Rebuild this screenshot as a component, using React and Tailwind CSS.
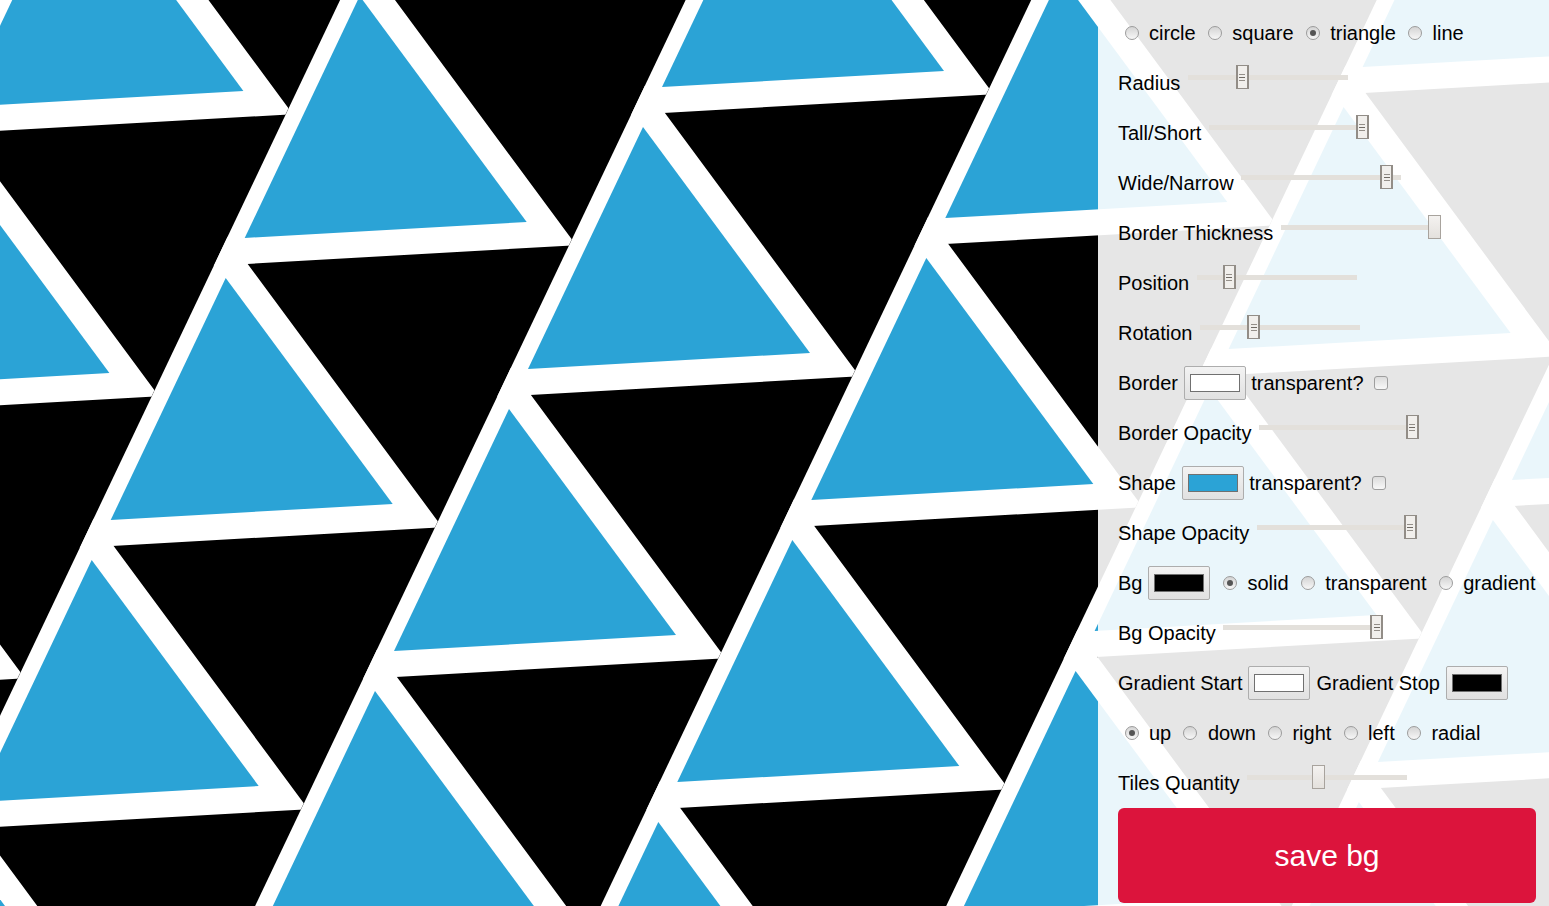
import React from "react";

const BLUE = "#2ba3d6";

function Pattern() {
  const O = [643, 127];
  const a = [283.3, 131];
  const b = [-134, 282];
  const la = Math.hypot(a[0], a[1]);
  const lb = Math.hypot(b[0], b[1]);
  const ah = [a[0] / la, a[1] / la];
  const bh = [b[0] / lb, b[1] / lb];
  const pt = (x, y, u, v) => `${(x + u * ah[0] + v * bh[0]).toFixed(1)},${(y + u * ah[1] + v * bh[1]).toFixed(1)}`;
  const tris = [];
  for (let i = -5; i <= 7; i++) {
    for (let j = -4; j <= 6; j++) {
      const x = O[0] + i * a[0] + j * b[0];
      const y = O[1] + i * a[1] + j * b[1];
      if (x < -400 || x > 1950 || y < -320 || y > 1200) continue;
      tris.push({
        tri: `${x},${y} ${x - 115},${y + 242} ${x + 167},${y + 226}`,
        clip: `${pt(x, y, -16, -400)} ${pt(x, y, 296, -400)} ${pt(x, y, 296, 700)} ${pt(x, y, -16, 700)}`,
      });
    }
  }
  return (
    <svg className="absolute inset-0" width="1549" height="906" viewBox="0 0 1549 906">
      <defs>
        {tris.map((t, k) => (
          <clipPath key={"c" + k} id={"tile" + k}>
            <polygon points={t.clip} />
          </clipPath>
        ))}
      </defs>
      <rect width="1549" height="906" fill="#000" />
      {tris.map((t, k) => (
        <polygon
          key={"w" + k}
          points={t.tri}
          clipPath={`url(#tile${k})`}
          fill="#fff"
          stroke="#fff"
          strokeWidth="52"
          strokeLinejoin="miter"
          strokeMiterlimit="10"
        />
      ))}
      {tris.map((t, k) => (
        <polygon key={"b" + k} points={t.tri} fill={BLUE} />
      ))}
    </svg>
  );
}

function Radio({ checked }) {
  return (
    <span className="ml-[6.5px] mr-[10.5px] flex h-[14px] w-[14px] shrink-0 items-center justify-center rounded-full border border-[#9c9c9c] bg-linear-to-b from-[#d4d4d4] to-[#f7f7f7]">
      {checked && <span className="h-[6px] w-[6px] rounded-full bg-[#555555]" />}
    </span>
  );
}

function Checkbox() {
  return (
    <span className="ml-[10px] block h-[14px] w-[14px] shrink-0 rounded-[3px] border border-[#9e9e9e] bg-linear-to-b from-[#dcdcdc] to-[#f8f8f8]" />
  );
}

function ColorBox({ color, className }) {
  return (
    <span className={"flex h-[34px] w-[62px] shrink-0 items-center justify-center rounded-[2px] border border-[#adadad] bg-linear-to-b from-[#f3f3f3] to-[#e1e1e1] " + className}>
      <span className="block h-[18px] w-[50px] border border-[#707070]" style={{ backgroundColor: color }} />
    </span>
  );
}

function Slider({ value, plain }) {
  const left = Math.round(value * 147);
  return (
    <span className="relative mb-[12px] ml-[7.6px] flex h-[24px] w-[160px] shrink-0 items-center">
      <span className="block h-[5px] w-full bg-[#e3e0db]" />
      {plain ? (
        <span
          className="absolute top-0 flex h-[24px] w-[13px] flex-col border border-[#a8a39d] bg-linear-to-b from-[#f4f2f0] to-[#e4e1dd]"
          style={{ left: left + "px" }}
        />
      ) : (
        <span
          className="absolute top-0 flex h-[24px] w-[13px] flex-col items-center justify-center gap-[2px] border-x-2 border-y border-[#928d87] bg-[#f1efec]"
          style={{ left: left + "px" }}
        >
          <span className="block h-px w-[6px] bg-[#948f89]" />
          <span className="block h-px w-[6px] bg-[#6f6a64]" />
          <span className="block h-px w-[6px] bg-[#948f89]" />
        </span>
      )}
    </span>
  );
}

function Row({ children }) {
  return <div className="flex h-[50px] items-center whitespace-nowrap">{children}</div>;
}

function Opt({ label, checked }) {
  return (
    <>
      <Radio checked={checked} />
      <span className="mr-[5.7px]">{label}</span>
    </>
  );
}

export default function App() {
  return (
    <div className="relative h-[906px] w-full overflow-hidden font-['Liberation_Sans',Arial,sans-serif]">
      <Pattern />
      <div className="relative flex h-full justify-end">
        <div className="h-full w-[451px] bg-[rgba(255,255,255,0.9)] pl-[20px] pt-[8px] text-[20px] leading-[23px] text-black">
          <Row>
            <Opt label="circle" />
            <Opt label="square" />
            <Opt label="triangle" checked />
            <Opt label="line" />
          </Row>
          <Row>
            <span>Radius</span>
            <Slider value={48 / 147} />
          </Row>
          <Row>
            <span>Tall/Short</span>
            <Slider value={1} />
          </Row>
          <Row>
            <span>Wide/Narrow</span>
            <Slider value={139 / 147} />
          </Row>
          <Row>
            <span>Border Thickness</span>
            <Slider value={1} plain />
          </Row>
          <Row>
            <span>Position</span>
            <Slider value={26 / 147} />
          </Row>
          <Row>
            <span>Rotation</span>
            <Slider value={47 / 147} />
          </Row>
          <Row>
            <span>Border</span>
            <ColorBox color="#ffffff" className="ml-[5.5px]" />
            <span className="ml-[5.7px]">transparent?</span>
            <Checkbox />
          </Row>
          <Row>
            <span>Border Opacity</span>
            <Slider value={1} />
          </Row>
          <Row>
            <span>Shape</span>
            <ColorBox color={BLUE} className="ml-[5.7px]" />
            <span className="ml-[5.7px]">transparent?</span>
            <Checkbox />
          </Row>
          <Row>
            <span>Shape Opacity</span>
            <Slider value={1} />
          </Row>
          <Row>
            <span>Bg</span>
            <ColorBox color="#000000" className="ml-[6px] mr-[6px]" />
            <Radio checked />
            <span className="mr-[5.7px]">solid</span>
            <Opt label="transparent" />
            <Opt label="gradient" />
          </Row>
          <Row>
            <span>Bg Opacity</span>
            <Slider value={1} />
          </Row>
          <Row>
            <span>Gradient Start</span>
            <ColorBox color="#ffffff" className="ml-[5.5px]" />
            <span className="ml-[6.5px]">Gradient Stop</span>
            <ColorBox color="#000000" className="ml-[5.6px]" />
          </Row>
          <Row>
            <Opt label="up" checked />
            <Opt label="down" />
            <Opt label="right" />
            <Opt label="left" />
            <Opt label="radial" />
          </Row>
          <Row>
            <span>Tiles Quantity</span>
            <Slider value={65 / 147} plain />
          </Row>
          <button className="flex h-[95px] w-[418px] items-center justify-center rounded-[6px] bg-[#dc143c] text-[30px] leading-[34px] text-white">
            save bg
          </button>
        </div>
      </div>
    </div>
  );
}
